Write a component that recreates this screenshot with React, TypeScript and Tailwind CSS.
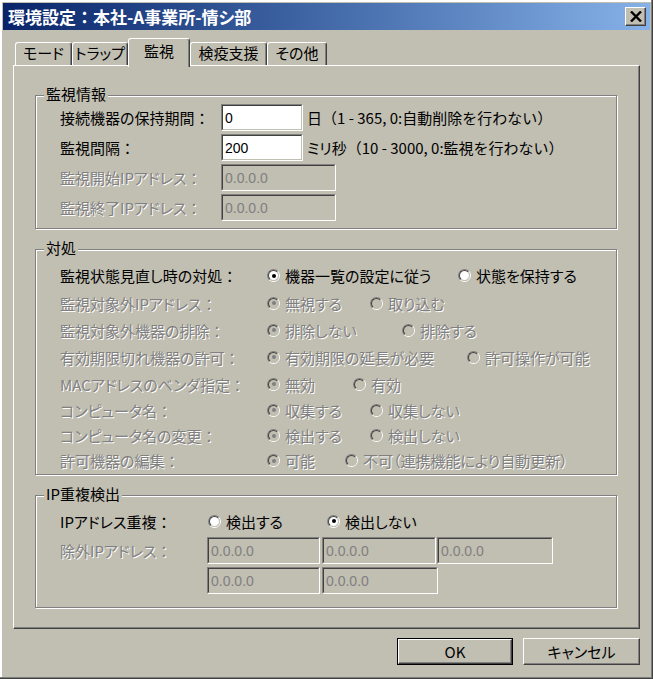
import React from "react";

const N = "[font-feature-settings:normal]";

const T = ({ s }: { s: string }) => {
  const parts = s.split(/(：)/);
  return (
    <>
      {parts.map((p, i) =>
        p === "：" ? (
          <span key={i} className={N}>
            ：
          </span>
        ) : (
          <React.Fragment key={i}>{p}</React.Fragment>
        )
      )}
    </>
  );
};

const Radio = ({ checked = false, disabled = false }: { checked?: boolean; disabled?: boolean }) => (
  <span className="inline-flex w-[13px] h-[13px] shrink-0 rounded-full border border-t-[#808080] border-l-[#808080] border-b-white border-r-white">
    <span
      className={`flex w-full h-full items-center justify-center rounded-full border border-t-[#404040] border-l-[#404040] border-b-[#c1beb2] border-r-[#c1beb2] ${
        disabled ? "bg-[#c1beb2]" : "bg-white"
      }`}
    >
      {checked && <span className={`w-[4px] h-[4px] rounded-full ${disabled ? "bg-[#808080]" : "bg-black"}`} />}
    </span>
  </span>
);

const Edit = ({ value, disabled = false, w }: { value: string; disabled?: boolean; w: string }) => (
  <div className={`h-[27px] ${w} shrink-0 border border-t-[#808080] border-l-[#808080] border-b-white border-r-white`}>
    <div
      className={`h-full w-full flex items-center pl-[2px] border border-t-[#404040] border-l-[#404040] border-b-[#c1beb2] border-r-[#c1beb2] font-['Liberation_Sans',sans-serif] text-[14px] leading-none ${
        disabled ? "bg-[#c1beb2] text-[#808080]" : "bg-white text-black"
      }`}
    >
      {value}
    </div>
  </div>
);

const dis = "text-[#808080] [text-shadow:1px_1px_0_#ffffff]";

const Group = ({ label, className, children }: { label: string; className: string; children: React.ReactNode }) => (
  <div className={`relative shrink-0 border border-[#808080] shadow-[inset_1px_1px_0_#ffffff,1px_1px_0_#ffffff] ${className}`}>
    <span className="absolute -top-[11px] left-[8px] px-[2px] bg-[#c1beb2] leading-[18px]">{label}</span>
    {children}
  </div>
);

const Tab = ({ w, children }: { w: string; children: React.ReactNode }) => (
  <div
    className={`${w} h-[23px] shrink-0 flex items-center justify-center pb-[3px] rounded-t-[3px] border-t border-l border-r border-t-white border-l-white border-r-[#404040] shadow-[inset_-1px_0_0_#808080] leading-none`}
  >
    {children}
  </div>
);

const rows = [
  { label: "監視状態見直し時の対処：", d: false, a: "機器一覧の設定に従う", b: "状態を保持する", w: "w-[191px]" },
  { label: "監視対象外IPアドレス：", d: true, a: "無視する", b: "取り込む", w: "w-[103px]" },
  { label: "監視対象外機器の排除：", d: true, a: "排除しない", b: "排除する", w: "w-[135px]" },
  { label: "有効期限切れ機器の許可：", d: true, a: "有効期限の延長が必要", b: "許可操作が可能", w: "w-[200px]" },
  { label: "MACアドレスのベンダ指定：", d: true, a: "無効", b: "有効", w: "w-[86px]" },
  { label: "コンピュータ名：", d: true, a: "収集する", b: "収集しない", w: "w-[103px]" },
  { label: "コンピュータ名の変更：", d: true, a: "検出する", b: "検出しない", w: "w-[103px]" },
  { label: "許可機器の編集：", d: true, a: "可能", b: "不可（連携機能により自動更新）", w: "w-[78px]" },
];

const rowH = ["h-[27px]", "h-[28px]", "h-[26px]", "h-[28px]", "h-[26px]", "h-[26px]", "h-[25px]", "h-[25px]"];

export default function App() {
  return (
    <div className="w-[653px] h-[679px] flex flex-col p-[3px] bg-[#c1beb2] shadow-[inset_-1px_-1px_0_#404040,inset_-2px_-2px_0_#808080,inset_2px_2px_0_#ffffff] font-['Noto_Sans_CJK_JP',sans-serif] [font-feature-settings:'palt'] text-[15px] text-black">
      {/* Title bar */}
      <div className="h-[27px] shrink-0 flex items-center justify-between pl-[5px] pr-[4px] bg-linear-to-r from-[#0a246a] to-[#86b2e8]">
        <span className="text-white font-bold text-[17px] leading-none">
          <T s="環境設定：本社-A事業所-情シ部" />
        </span>
        <div className="w-[21px] h-[19px] flex items-center justify-center bg-[#c1beb2] border border-t-white border-l-white border-b-[#404040] border-r-[#404040] shadow-[inset_-1px_-1px_0_#808080]">
          <svg width="12" height="11" viewBox="0 0 12 11">
            <path d="M1 0.5 L11 10.5 M11 0.5 L1 10.5" stroke="#000" strokeWidth="2.4" />
          </svg>
        </div>
      </div>

      <div className="flex flex-col px-[10px] pt-[8px]">
        {/* Tabs */}
        <div className="flex items-end h-[27px] pl-[2px]">
          <Tab w="w-[57px]">モード</Tab>
          <Tab w="w-[56px]">トラップ</Tab>
          <div className="relative z-10 w-[62px] h-[29px] -mb-[2px] shrink-0 flex items-center justify-center pb-[6px] bg-[#c1beb2] rounded-t-[3px] border-t border-l border-r border-t-white border-l-white border-r-[#404040] shadow-[inset_-1px_0_0_#808080] leading-none">
            監視
          </div>
          <Tab w="w-[77px]">検疫支援</Tab>
          <Tab w="w-[60px]">その他</Tab>
        </div>

        {/* Panel */}
        <div className="h-[564px] flex flex-col gap-[20px] pt-[29px] pl-[21px] pr-[22px] border border-t-white border-l-white border-r-[#404040] border-b-[#404040] shadow-[inset_-1px_-1px_0_#808080]">
          <Group label="監視情報" className="h-[134px]">
            <div className="flex flex-col gap-[3px] pt-[8px] pl-[24px]">
              <div className="flex items-center h-[27px]">
                <span className="w-[161px] shrink-0 leading-none">
                  <T s="接続機器の保持期間：" />
                </span>
                <Edit value="0" w="w-[82px]" />
                <span className={`ml-[4px] leading-none ${N}`}>日（1 - 365, 0:自動削除を行わない）</span>
              </div>
              <div className="flex items-center h-[27px]">
                <span className="w-[161px] shrink-0 leading-none">
                  <T s="監視間隔：" />
                </span>
                <Edit value="200" w="w-[82px]" />
                <span className="ml-[4px] leading-none">
                  ミリ秒<span className={N}>（10 - 3000, 0:監視を行わない）</span>
                </span>
              </div>
              <div className="flex items-center h-[27px]">
                <span className={`w-[161px] shrink-0 leading-none ${dis}`}>
                  <T s="監視開始IPアドレス：" />
                </span>
                <Edit value="0.0.0.0" w="w-[115px]" disabled />
              </div>
              <div className="flex items-center h-[27px]">
                <span className={`w-[161px] shrink-0 leading-none ${dis}`}>
                  <T s="監視終了IPアドレス：" />
                </span>
                <Edit value="0.0.0.0" w="w-[115px]" disabled />
              </div>
            </div>
          </Group>

          <Group label="対処" className="h-[226px]">
            <div className="flex flex-col pt-[12px] pl-[24px]">
              {rows.map((r, i) => (
                <div key={i} className={`flex items-center ${rowH[i]}`}>
                  <span className={`w-[207px] shrink-0 leading-none ${r.d ? dis : ""}`}>
                    <T s={r.label} />
                  </span>
                  <span className={`${r.w} shrink-0 flex items-center gap-[5px]`}>
                    <Radio checked disabled={r.d} />
                    <span className={`leading-none whitespace-nowrap ${r.d ? dis : ""}`}>{r.a}</span>
                  </span>
                  <span className="flex items-center gap-[5px]">
                    <Radio disabled={r.d} />
                    <span className={`leading-none whitespace-nowrap ${r.d ? dis : ""}`}>{r.b}</span>
                  </span>
                </div>
              ))}
            </div>
          </Group>

          <Group label="IP重複検出" className="h-[113px]">
            <div className="flex flex-col pt-[10px] pl-[24px]">
              <div className="flex items-center h-[30px]">
                <span className="w-[148px] shrink-0 leading-none">
                  <T s="IPアドレス重複：" />
                </span>
                <span className="w-[119px] shrink-0 flex items-center gap-[5px]">
                  <Radio />
                  <span className="leading-none">検出する</span>
                </span>
                <span className="flex items-center gap-[5px]">
                  <Radio checked />
                  <span className="leading-none">検出しない</span>
                </span>
              </div>
              <div className="mt-[1px] grid grid-cols-[147px_115px_115px_116px] gap-y-[3px] items-center">
                <span className={`leading-none ${dis}`}>
                  <T s="除外IPアドレス：" />
                </span>
                <Edit value="0.0.0.0" w="w-[113px]" disabled />
                <Edit value="0.0.0.0" w="w-[114px]" disabled />
                <Edit value="0.0.0.0" w="w-[116px]" disabled />
                <span />
                <Edit value="0.0.0.0" w="w-[113px]" disabled />
                <Edit value="0.0.0.0" w="w-[116px]" disabled />
              </div>
            </div>
          </Group>
        </div>

        {/* Buttons */}
        <div className="flex justify-end gap-[10px] mt-[9px]">
          <div className="w-[116px] h-[27px] border border-black">
            <div className="w-full h-full flex items-center justify-center border border-t-white border-l-white border-b-[#404040] border-r-[#404040] shadow-[inset_-1px_-1px_0_#808080] leading-none">
              OK
            </div>
          </div>
          <div className="w-[117px] h-[27px] flex items-center justify-center border border-t-white border-l-white border-b-[#404040] border-r-[#404040] shadow-[inset_-1px_-1px_0_#808080] leading-none">
            キャンセル
          </div>
        </div>
      </div>
    </div>
  );
}
